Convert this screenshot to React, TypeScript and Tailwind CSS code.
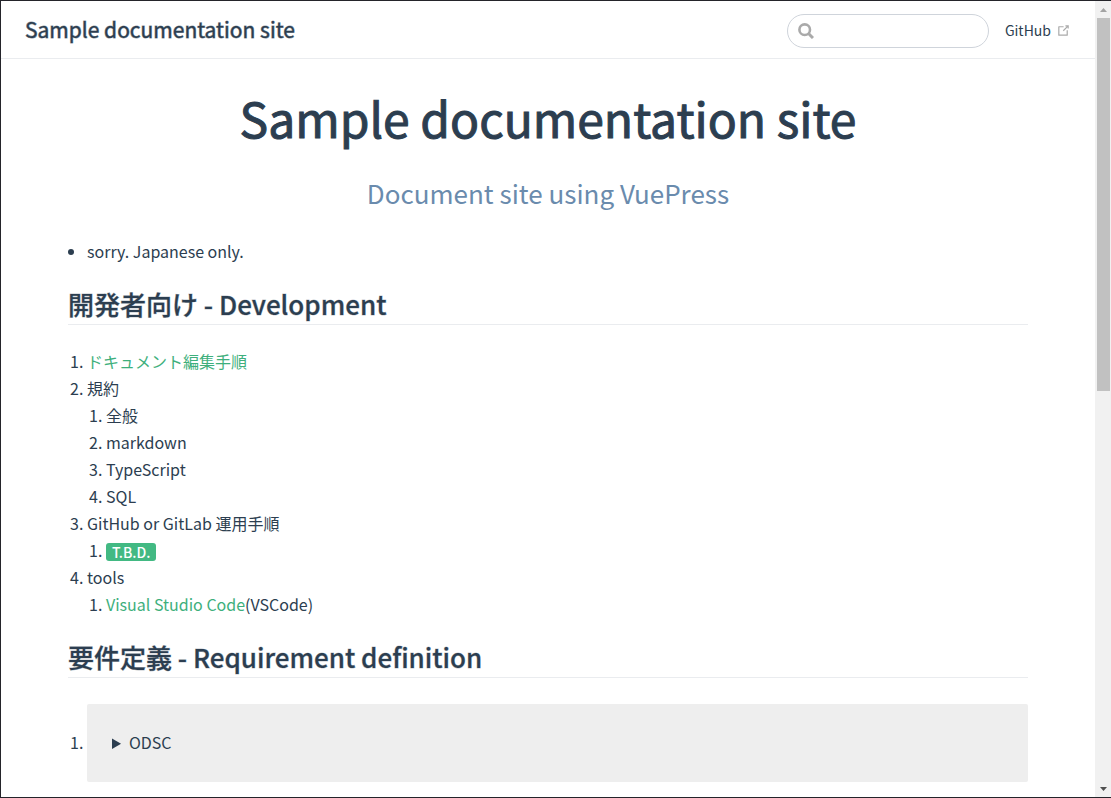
import { type ReactNode } from "react";

function SectionHeading({ children }: { children: ReactNode }) {
  return (
    <h2 className="mt-[22px] mb-[22px] border-b border-[#eaecef] pb-1 text-[26px] leading-[33px] font-medium [-webkit-text-stroke:1px_#2c3e5050]">
      {children}
    </h2>
  );
}

function DocLink({ children }: { children: ReactNode }) {
  return (
    <a href="#" className="text-[#3eaf7c]">
      {children}
    </a>
  );
}

function Header() {
  return (
    <header className="flex h-[58px] shrink-0 items-center justify-between border-b border-[#eaecef] px-6">
      <a href="#" className="pb-px text-[21px] leading-9 [-webkit-text-stroke:1px_#2c3e5090]">
        Sample documentation site
      </a>
      <div className="flex items-center pt-0.5">
        <div className="relative">
          <svg
            viewBox="0 0 16 16"
            className="pointer-events-none absolute top-[9px] left-[11px] size-4"
            fill="none"
            stroke="#aaa"
            strokeWidth="2.6"
          >
            <circle cx="6.7" cy="6.7" r="5.3" />
            <path d="M10.5 10.5L15 15" strokeWidth="3" />
          </svg>
          <input
            type="text"
            aria-label="Search"
            className="block h-[34px] w-[202px] rounded-full border border-[#cfd4db] bg-white pr-2 pl-8 text-sm outline-none focus:border-[#3eaf7c]"
          />
        </div>
        <a href="#" className="ml-4 flex items-center gap-[5px] pb-0.5 text-sm leading-6">
          GitHub
          <svg viewBox="0 0 100 100" className="mt-0.5 size-[15px]" fill="#aaa">
            <path d="M18.8,85.1h56c2.2,0,4-1.8,4-4v-32h-8v28h-48v-48h28v-8h-32c-2.2,0-4,1.8-4,4v56C14.8,83.3,16.6,85.1,18.8,85.1z" />
            <polygon points="45.7,48.7 51.3,54.3 77.2,28.5 77.2,37.2 85.2,37.2 85.2,14.9 62.8,14.9 62.8,22.9 71.5,22.9" />
          </svg>
        </a>
      </div>
    </header>
  );
}

function Scrollbar() {
  return (
    <div aria-hidden="true" className="flex w-4 shrink-0 flex-col bg-[#f1f1f1]">
      <div className="flex h-[17px] items-center justify-center">
        <svg viewBox="0 0 7 4" className="h-1 w-[7px]" fill="#a3a3a3">
          <path d="M0 4 3.5 0 7 4z" />
        </svg>
      </div>
      <div className="flex-1 px-0.5 pr-px">
        <div className="h-[49%] bg-[#c1c1c1]" />
      </div>
      <div className="flex h-[17px] items-center justify-center">
        <svg viewBox="0 0 7 4" className="h-1 w-[7px]" fill="#505050">
          <path d="M0 0h7L3.5 4z" />
        </svg>
      </div>
    </div>
  );
}

export default function App() {
  return (
    <div
      lang="ja"
      className="flex h-screen overflow-hidden border-y border-l border-[#24242a] bg-white font-['Noto_Sans_CJK_JP',sans-serif] text-base leading-[27px] text-[#2c3e50]"
    >
      <div className="flex min-w-0 flex-1 flex-col overflow-hidden">
        <Header />
        <main className="mx-auto w-full max-w-[960px]">
          <div className="text-center">
            <h1 className="mt-7 text-5xl leading-[60px] font-normal [-webkit-text-stroke:1px_#2c3e50]">
              Sample documentation site
            </h1>
            <p className="mt-7 text-[26px] leading-[35px] text-[#6a8bad]">
              Document site using VuePress
            </p>
          </div>
          <ul className="mt-7 list-disc pl-[19px]">
            <li>sorry. Japanese only.</li>
          </ul>
          <SectionHeading>開発者向け - Development</SectionHeading>
          <ol className="list-decimal pt-px pl-[19px]">
            <li>
              <DocLink>ドキュメント編集手順</DocLink>
            </li>
            <li>
              規約
              <ol className="list-decimal pl-[19px]">
                <li>全般</li>
                <li>markdown</li>
                <li>TypeScript</li>
                <li>SQL</li>
              </ol>
            </li>
            <li>
              GitHub or GitLab 運用手順
              <ol className="list-decimal pl-[19px]">
                <li>
                  <span className="mt-1.5 inline-block h-[18px] rounded-[3px] bg-[#42b983] px-1.5 align-top text-sm leading-[18px] font-medium text-white">
                    T.B.D.
                  </span>
                </li>
              </ol>
            </li>
            <li>
              tools
              <ol className="list-decimal pl-[19px]">
                <li>
                  <DocLink>Visual Studio Code</DocLink>(VSCode)
                </li>
              </ol>
            </li>
          </ol>
          <SectionHeading>要件定義 - Requirement definition</SectionHeading>
          <ol className="list-decimal pt-1 pl-[19px]">
            <li>
              <details className="rounded-xs bg-[#eee] px-[25px] pt-[23px] pb-[25px]">
                <summary className="cursor-pointer leading-[30px]">ODSC</summary>
              </details>
            </li>
          </ol>
        </main>
      </div>
      <Scrollbar />
    </div>
  );
}
